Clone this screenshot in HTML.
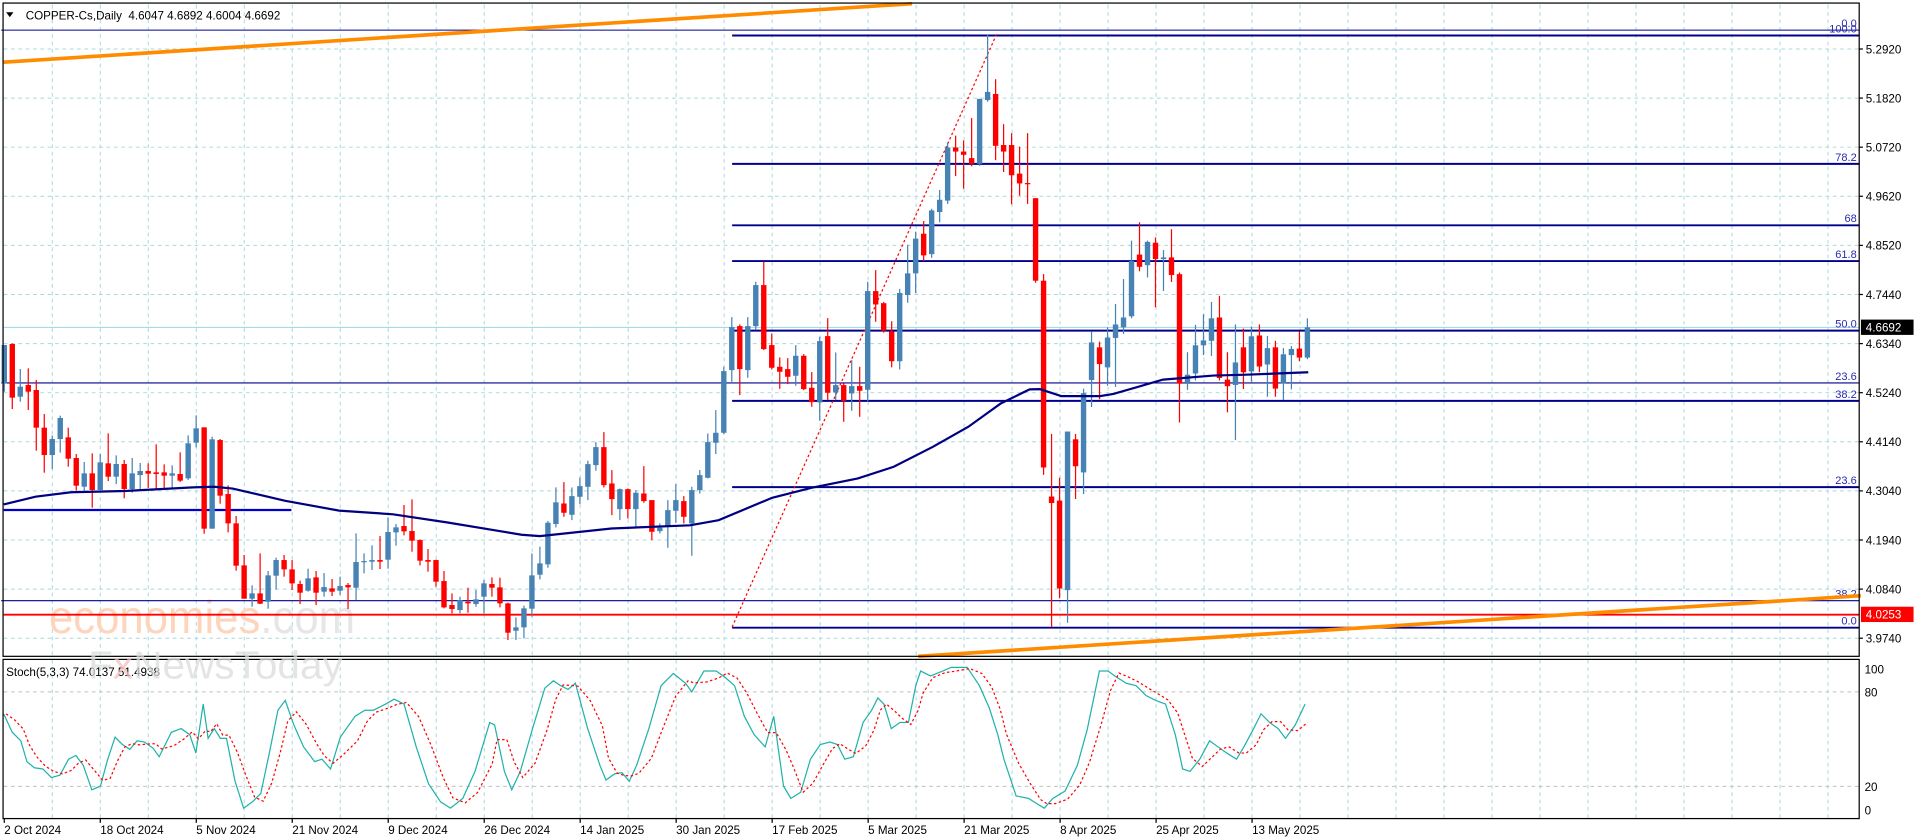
<!DOCTYPE html>
<html><head><meta charset="utf-8">
<style>
html,body{margin:0;padding:0;background:#fff;width:1916px;height:840px;overflow:hidden}
svg{display:block}
text{font-family:"Liberation Sans",sans-serif}
</style></head>
<body>
<svg id="s" width="1916" height="840" viewBox="0 0 1565 686" preserveAspectRatio="none" xmlns="http://www.w3.org/2000/svg"></svg>
<script>
var z3=[[1,45,160,45,185],[0,42,203,40,237],[1,170,200,117,215],[0,165,185,115,240],[0,180,293,150,362],[0,293,375,252,428],[1,327,375,317,417],[1,264,327,257,368],[0,322,386,293,410],[0,384,467,372,482],[1,430,470,396,483],[0,430,480,370,533],[1,397,480,372,480],[0,400,440,310,453],[1,402,440,376,462],[0,402,477,390,505],[1,430,477,384,488],[1,423,435,399,477],[0,423,431,400,474],[0,427,432,343,478],[0,427,437,403,478],[1,430,437,406,476],[0,432,452,367,456],[1,340,445,316,450],[1,295,338,256,352],[0,292,596,292,611],[1,328,596,320,596],[0,330,497,327,521],[0,492,580,466,607],[0,580,707,558,722],[0,706,806,675,806],[1,790,806,766,830],[0,790,821,670,822],[1,736,815,723,836],[1,690,737,683,779],[0,690,718,675,740],[0,718,760,690,780],[0,762,788,752,822],[1,745,782,716,785],[0,742,788,723,825],[1,771,785,729,800],[0,775,785,747,798],[1,768,782,740,795],[0,765,772,759,837],[1,696,773,610,810],[1,693,695,670,730],[1,690,695,646,720],[0,690,695,618,717],[1,606,689,562,716],[1,592,607,582,647],[0,588,604,525,616],[0,603,632,508,665],[0,630,692,628,706],[0,690,695,657,725],[0,690,755,689,770],[0,753,832,723,835],[0,825,837,790,850],[1,810,840,800,850],[0,815,820,773,848],[1,808,822,780,830],[1,760,800,750,850],[0,762,773,742,800],[0,772,820,743,832],[0,820,908,818,930],[1,892,902,862,930],[1,835,892,827,925],[1,736,836,670,860],[1,700,734,650,748],[1,578,703,573,713],[1,517,582,472,592]];
var z4=[[0,910,938,846,950],[1,888,944,862,960],[1,858,890,832,912],[1,792,860,782,900],[1,741,795,726,812],[0,741,855,696,862],[0,850,897,810,945],[1,867,927,865,960],[0,867,927,865,955],[1,878,927,870,982],[0,880,903,798,908],[0,900,995,900,1020],[1,983,993,970,1000],[1,930,980,900,1043],[1,900,932,852,968],[0,903,950,888,970],[1,870,970,860,1067],[1,825,870,810,880],[1,726,833,700,835],[1,698,728,630,762],[1,513,698,500,702],[1,381,510,351,545],[0,378,507,373,585],[1,378,510,351,533],[1,255,378,245,390],[0,255,447,185,450],[0,435,503,400,508],[0,500,515,472,566],[0,507,530,474,552],[1,467,527,435,557],[0,467,567,462,570],[0,563,606,516,620],[1,423,607,410,662],[0,408,578,354,600],[1,555,577,457,600],[0,555,602,550,665],[1,558,580,480,632],[0,558,572,500,650],[1,273,569,245,604],[0,273,313,210,365]];
var z5=[[0,693,760,690,765],[0,762,835,737,850],[1,668,835,658,855],[1,620,673,550,692],[1,535,620,518,668],[0,523,576,492,590],[1,466,573,462,582],[1,440,470,416,495],[1,312,442,300,450],[0,312,322,283,382],[0,322,330,295,413],[0,338,352,240,358],[1,193,352,193,357],[1,176,196,35,200],[0,181,308,145,343],[0,306,322,255,372],[0,306,380,277,451],[0,376,400,310,430],[0,399,402,277,450],[0,436,638,436,643],[0,638,1095,622,1113],[0,1166,1182,1013,1485],[0,1176,1391,1120,1415],[1,1007,1395,1007,1475],[0,1026,1092,1013,1172],[1,913,1107,902,1160],[1,789,881,763,947],[0,801,842,787,928],[1,777,850,752,895],[1,745,778,695,898],[1,728,752,634,768],[1,590,725,540,730],[0,574,604,495,615],[1,543,600,540,630],[0,545,585,532,703],[1,581,585,563,663],[0,581,624,512,641],[0,622,890,618,985],[1,868,888,813,905],[1,796,865,746,882],[1,784,796,720,820],[1,730,785,690,822],[0,728,876,675,882],[0,880,896,813,960],[1,838,893,745,1028],[0,801,862,755,903],[1,774,860,750,885],[0,772,848,745,862],[1,803,843,773,922],[0,801,902,785,922],[1,818,890,803,930],[1,805,820,798,904],[0,804,826,762,835],[1,752,826,730,830]];
function f3(z){return 269.5+z/3.673} function f4(z){return 163.4+z/3.673} function f5(z){return 16.3+z/2.996}
var o=[];
function L(x1,y1,x2,y2,c,w,d){o.push('<line x1="'+x1+'" y1="'+y1+'" x2="'+x2+'" y2="'+y2+'" stroke="'+c+'" stroke-width="'+w+'"'+(d?' stroke-dasharray="'+d+'"':'')+'/>');}
function T(x,y,t,s,c,a,extra){o.push('<text x="'+x+'" y="'+y+'" font-size="'+s+'" fill="'+c+'"'+(a?' text-anchor="'+a+'"':'')+(extra||'')+'>'+t+'</text>');}
var R=1518.6;
for(var k=0;k<=38;k++){var gx=42.7+39.2*k; if(gx<R){L(gx,4,gx,535,'#a8d8dc',0.8,'3,3');L(gx,539,gx,668,'#a8d8dc',0.8,'3,3');}}
for(var k=0;k<13;k++){var gy=40+40.1*k;L(3,gy,R,gy,'#a8d8dc',0.8,'3,3');}
L(3,565,R,565,'#c0c0c0',0.8,'3,3');L(3,642.2,R,642.2,'#c0c0c0',0.8,'3,3');
T(40,517,'economies<tspan fill="#e6e6e6">.com</tspan>',38,'#fdd5bd','',' textLength="250" lengthAdjust="spacingAndGlyphs"');
L(3,267.4,R,267.4,'#a8dce4',1);
var F=[[24.6,'0.0',1,0.8],[29,'100.0',598,1.6],[133.8,'78.2',598,1.6],[184,'68',598,1.6],[213.2,'61.8',598,1.6],[270,'50.0',598,1.6],[312.7,'23.6',1,0.9],[327.4,'38.2',598,1.6],[397.8,'23.6',598,1.6],[490.6,'38.2',1,0.9],[512.6,'0.0',598,1.6]];
F.forEach(function(a){L(a[2],a[0],R,a[0],'#00008b',a[3]);T(R-2,a[0]-2.5,a[1],9,'#2a2ab0','end');});
L(3,502,R,502,'#ff0000',1.6);
o.push('<polyline points="3,50.8 745,3" fill="none" stroke="#ff8c00" stroke-width="3"/>');
o.push('<polyline points="750,536 1520,486.5" fill="none" stroke="#ff8c00" stroke-width="3"/>');
L(598,512,814,28,'#ff0000',1,'2,2');
L(3,416.5,238,416.5,'#0000cd',1.8);
function cand(i,a,f){var x=3.5+6.53*i;var c=a[0]?'#4682b4':'#ff0000';var bt=f(a[1]),bb=f(a[2]),wt=f(Math.min(a[3],a[1])),wb=f(Math.max(a[4],a[2]));
o.push('<line x1="'+x+'" y1="'+wt+'" x2="'+x+'" y2="'+wb+'" stroke="'+c+'" stroke-width="1"/>');
o.push('<rect x="'+(x-2.2)+'" y="'+bt+'" width="4.4" height="'+Math.max(1,bb-bt)+'" fill="'+c+'"/>');}
z3.forEach(function(a,i){cand(i,a,f3)});z4.forEach(function(a,i){cand(70+i,a,f4)});z5.forEach(function(a,i){cand(110+i,a,f5)});
o.push('<polyline fill="none" stroke="#000080" stroke-width="1.8" points="3,412 29,405.6 58,402 102,401 157.5,398 175,397.5 190,399 233,409 277,417 321,420 365,426.6 408,433.7 426,436.7 441,437.8 499.4,431.6 563.6,429 587,424.8 630.7,406.5 662.8,398.4 700.7,390.7 730,381.2 762,364.9 791,348.5 817.4,329.5 841,318 849.5,317.8 867,323.5 898.5,323.5 909.4,321.7 950,310 991,306.7 1018,306 1068.6,304"/>');
var K=[[3,583],[10,598],[17,605],[22,622],[28,627],[35,628],[42,635],[49,633],[56,620],[62,617],[68,625],[75,645],[82,642],[88,620],[94,602],[100,608],[106,612],[112,605],[118,606],[125,611],[130,618],[140,598],[148,595],[155,600],[160,615],[166,575],[170,603],[175,595],[180,603],[185,603],[192,638],[199,660],[206,655],[213,648],[220,615],[227,580],[233,572],[240,592],[248,610],[257,622],[263,620],[270,628],[278,602],[290,585],[298,580],[305,580],[315,575],[322,571],[330,575],[340,610],[350,640],[360,655],[368,660],[378,652],[388,630],[400,590],[404,592],[412,630],[418,645],[425,630],[435,595],[445,562],[452,556],[458,560],[464,563],[470,558],[480,595],[490,625],[495,637],[502,632],[508,631],[514,638],[520,625],[530,595],[540,560],[550,550],[560,558],[565,565],[575,548],[585,548],[592,553],[600,560],[608,585],[616,600],[625,610],[632,585],[640,642],[646,652],[654,647],[662,620],[670,608],[678,606],[684,608],[690,620],[697,618],[705,590],[712,580],[717,570],[722,575],[728,595],[735,590],[742,590],[748,560],[752,548],[760,552],[770,548],[777,545],[790,545],[800,560],[808,578],[815,600],[820,620],[830,650],[840,652],[848,657],[853,660],[860,652],[870,646],[880,625],[888,596],[898,548],[905,548],[912,553],[920,558],[928,560],[936,568],[944,572],[952,575],[960,600],[966,628],[972,630],[980,620],[988,605],[995,610],[1002,615],[1010,620],[1016,610],[1024,595],[1030,583],[1037,590],[1044,595],[1050,603],[1058,592],[1066,575]];
var D=K.map(function(p,i){var a=K[Math.max(0,i-1)][1],b=K[Math.max(0,i-2)][1];return [p[0]+2,(p[1]+a+b)/3];});
o.push('<polyline fill="none" stroke="#20b2aa" stroke-width="1" points="'+K.map(function(p){return p.join(',')}).join(' ')+'"/>');
o.push('<polyline fill="none" stroke="#ff0000" stroke-width="1" stroke-dasharray="2,2" points="'+D.map(function(p){return p.join(',')}).join(' ')+'"/>');
o.push('<rect x="2.5" y="2.5" width="'+(R-2.5)+'" height="533.5" fill="none" stroke="#000" stroke-width="1"/>');
o.push('<rect x="2.5" y="538.5" width="'+(R-2.5)+'" height="130" fill="none" stroke="#000" stroke-width="1"/>');
var P=['5.2920','5.1820','5.0720','4.9620','4.8520','4.7440','4.6340','4.5240','4.4140','4.3040','4.1940','4.0840','3.9740'];
P.forEach(function(p,k){var y=40+40.1*k;L(R,y,R+3,y,'#000',1);T(1524,y+3.5,p,9.5,'#000');});
o.push('<rect x="1520" y="261" width="43" height="12.5" fill="#000"/>');T(1524,270.8,'4.6692',9.5,'#fff');
o.push('<rect x="1520" y="495.5" width="43" height="12.5" fill="#ff0000"/>');T(1524,505.3,'4.0253',9.5,'#fff');
T(1523,550,'100',9.5,'#000');T(1523,569,'80',9.5,'#000');T(1523,646,'20',9.5,'#000');T(1523,665,'0',9.5,'#000');
var DT=['2 Oct 2024','18 Oct 2024','5 Nov 2024','21 Nov 2024','9 Dec 2024','26 Dec 2024','14 Jan 2025','30 Jan 2025','17 Feb 2025','5 Mar 2025','21 Mar 2025','8 Apr 2025','25 Apr 2025','13 May 2025'];
DT.forEach(function(d,k){var x=3.5+78.4*k;L(x,668,x,672,'#000',1);T(x,681,d,9.5,'#000');});
o.push('<path d="M5,10 L11,10 L8,14 Z" fill="#000"/>');
T(21,16,'COPPER-Cs,Daily&#160;&#160;4.6047 4.6892 4.6004 4.6692',9.5,'#000');
T(5,552,'Stoch(5,3,3) 74.0137 51.4938',9.5,'#000');
T(72,554,'F<tspan fill="#f3c0c0">x</tspan>NewsToday',32,'#dcdcdc','',' opacity="0.75" textLength="208" lengthAdjust="spacingAndGlyphs"');
document.getElementById('s').innerHTML=o.join('');
</script>
</body></html>
